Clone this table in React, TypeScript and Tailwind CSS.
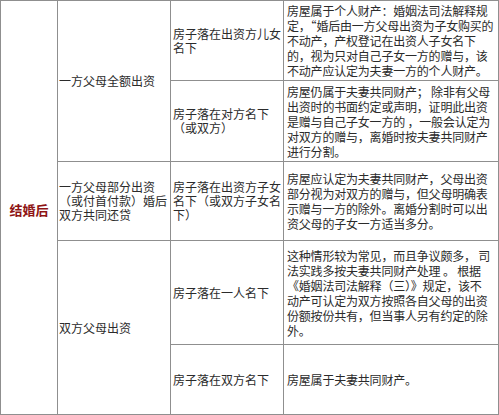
import React from "react";

const L = ({ lines }: { lines: string[] }) => (
  <>
    {lines.map((l, i) => (
      <div key={i} className="whitespace-nowrap">
        {l}
      </div>
    ))}
  </>
);

export default function App() {
  const font = {
    fontFamily: '"Noto Sans CJK SC", "Noto Sans", sans-serif',
  };
  const cell = "border border-[#8f8f8f] align-middle p-0";
  const mid = "px-[2px] text-[12px] leading-[14px] text-[#2b2b2b]";
  const right = "pl-[3px] text-[12px] leading-[15px] text-[#2b2b2b] tracking-[-0.2px]";
  return (
    <div className="bg-white w-[499px] h-[415px]" style={font}>
      <table className="border-collapse table-fixed w-[498px]">
        <colgroup>
          <col className="w-[57px]" />
          <col className="w-[113px]" />
          <col className="w-[113px]" />
          <col className="w-[215px]" />
        </colgroup>
        <tbody>
          <tr className="h-[80px]">
            <td rowSpan={5} className={`${cell} text-center`}>
              <span className="text-[13px] font-bold text-[#8e1414]">结婚后</span>
            </td>
            <td rowSpan={2} className={cell}>
              <div className="pl-[1px] text-[12px] leading-[14px] text-[#2b2b2b]">
                一方父母全额出资
              </div>
            </td>
            <td className={cell}>
              <div className={mid}>
                <L lines={["房子落在出资方儿女", "名下"]} />
              </div>
            </td>
            <td className={cell}>
              <div className={right}>
                <L
                  lines={[
                    "房屋属于个人财产：婚姻法司法解释规",
                    "定，“婚后由一方父母出资为子女购买的",
                    "不动产，产权登记在出资人子女名下",
                    "的，视为只对自己子女一方的赠与，该",
                    "不动产应认定为夫妻一方的个人财产。",
                  ]}
                />
              </div>
            </td>
          </tr>
          <tr className="h-[81px]">
            <td className={cell}>
              <div className={mid}>
                <L lines={["房子落在对方名下", "（或双方）"]} />
              </div>
            </td>
            <td className={cell}>
              <div className={right}>
                <L
                  lines={[
                    "房屋仍属于夫妻共同财产； 除非有父母",
                    "出资时的书面约定或声明，证明此出资",
                    "是赠与自己子女一方的 ，一般会认定为",
                    "对双方的赠与，离婚时按夫妻共同财产",
                    "进行分割。",
                  ]}
                />
              </div>
            </td>
          </tr>
          <tr className="h-[79px]">
            <td className={cell}>
              <div className="pl-[1px] text-[12px] leading-[14px] text-[#2b2b2b]">
                <L lines={["一方父母部分出资", "（或付首付款）婚后", "双方共同还贷"]} />
              </div>
            </td>
            <td className={cell}>
              <div className={mid}>
                <L lines={["房子落在出资方子女", "名下（或双方子女名", "下）"]} />
              </div>
            </td>
            <td className={cell}>
              <div className={right}>
                <L
                  lines={[
                    "房屋应认定为夫妻共同财产，父母出资",
                    "部分视为对双方的赠与，但父母明确表",
                    "示赠与一方的除外。离婚分割时可以出",
                    "资父母的子女一方适当多分。",
                  ]}
                />
              </div>
            </td>
          </tr>
          <tr className="h-[104px]">
            <td rowSpan={2} className={cell}>
              <div className="pl-[1px] text-[12px] leading-[14px] text-[#2b2b2b]">
                双方父母出资
              </div>
            </td>
            <td className={cell}>
              <div className={mid}>房子落在一人名下</div>
            </td>
            <td className={cell}>
              <div className={`${right} leading-[15.5px]`}>
                <L
                  lines={[
                    "这种情形较为常见，而且争议颇多， 司",
                    "法实践多按夫妻共同财产处理 。 根据",
                    "《婚姻法司法解释（三）》规定，该不",
                    "动产可认定为双方按照各自父母的出资",
                    "份额按份共有，但当事人另有约定的除",
                    "外。",
                  ]}
                />
              </div>
            </td>
          </tr>
          <tr className="h-[70px]">
            <td className={cell}>
              <div className={mid}>房子落在双方名下</div>
            </td>
            <td className={cell}>
              <div className={right}>房屋属于夫妻共同财产。</div>
            </td>
          </tr>
        </tbody>
      </table>
    </div>
  );
}
